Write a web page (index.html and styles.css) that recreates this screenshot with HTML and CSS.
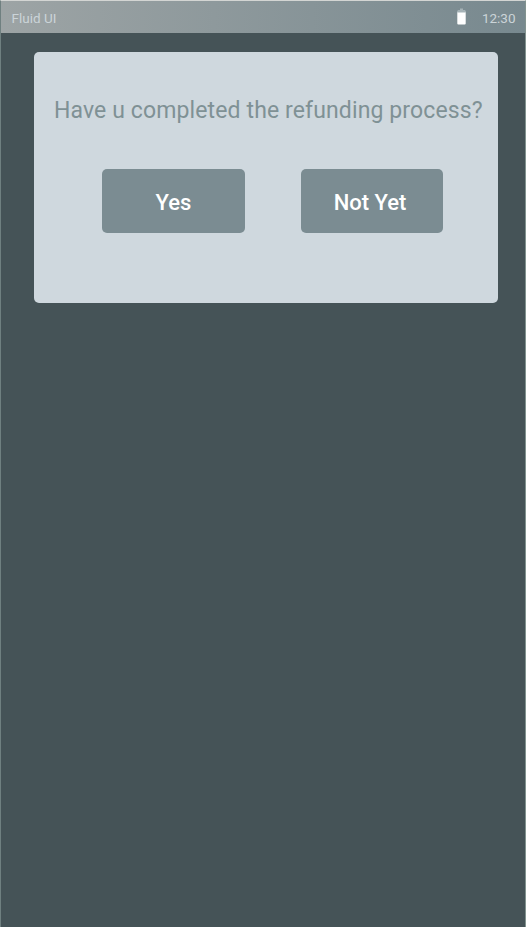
FILE: index.html
```html
<!DOCTYPE html>
<html lang="en">
<head>
<meta charset="utf-8">
<title>Refunding process</title>
<link rel="stylesheet" href="styles.css">
</head>
<body>
<div class="screen">
  <header class="status-bar">
    <span class="app-name">Fluid UI</span>
    <svg class="battery" width="9" height="17" viewBox="0 0 9 17">
      <path d="M3 0.5h3v1.5h2L9 3.5V5H0V3.5L1 2h2z" fill="#a5b2b6"/>
      <path d="M0.3 4.5h8.4v11a1 1 0 0 1-1 1H1.3a1 1 0 0 1-1-1z" fill="#fff"/>
    </svg>
    <span class="clock">12:30</span>
  </header>
  <main class="dialog">
    <h1 class="question">Have u completed the refunding process?</h1>
    <div class="actions">
      <button class="btn btn-yes">Yes</button>
      <button class="btn btn-no">Not Yet</button>
    </div>
  </main>
</div>
</body>
</html>
```
FILE: styles.css
```css
* { box-sizing: border-box; }
body { margin: 0; font-family: Roboto, sans-serif; }
.screen { height: 927px; background: #455357; border: 1px solid #6f8080; border-top-color: #d3d5d3; border-right-color: #82938f; border-bottom: 0; }
.status-bar { display: flex; align-items: center; height: 32px; padding: 2px 9.5px 1px 10.5px; background: linear-gradient(90deg, #9da4a5, #78898f); color: #cbd4d8; font-size: 13.5px; }
.app-name { flex: 1; }
.battery { margin: -2px 16px 0 0; }
.dialog { margin: 19px 27.5px 0 32.5px; height: 251px; padding: 44px 0 0 20.5px; border-radius: 5px; background: #cfd8de; }
.question { margin: 0; font-size: 23px; line-height: 30px; font-weight: 400; letter-spacing: 0.12px; color: #7f9195; white-space: nowrap; }
.actions { display: flex; gap: 56px; margin: 43px 0 0 47.5px; }
.btn { width: 143px; height: 64px; padding: 2px 0 0 1px; border: 0; border-radius: 5px; background: #7b8c92; color: #fff; font: 500 22px Roboto, sans-serif; }
.btn-no { width: 142px; padding-right: 4px; }
```
